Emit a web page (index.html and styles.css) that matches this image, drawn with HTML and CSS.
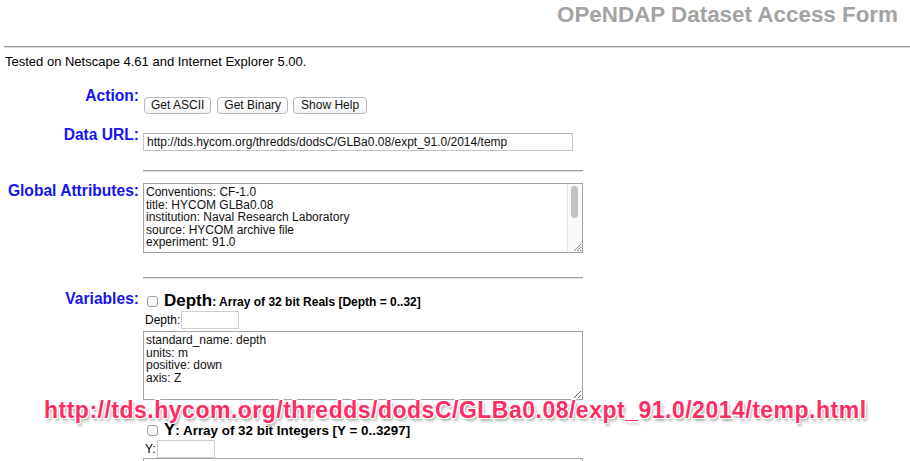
FILE: index.html
```html
<!DOCTYPE html>
<html lang="en">
<head>
<meta charset="utf-8">
<title>OPeNDAP Dataset Access Form</title>
<link rel="stylesheet" href="styles.css">
</head>
<body>
<h1 class="title">OPeNDAP Dataset Access Form</h1>
<div class="rule-full"></div>
<p class="note">Tested on Netscape 4.61 and Internet Explorer 5.00.</p>

<div class="form">
  <div class="row row-action">
    <div class="label">Action:</div>
    <div class="value actions">
      <button type="button">Get ASCII</button><button type="button">Get Binary</button><button type="button">Show Help</button>
    </div>
  </div>

  <div class="row row-url">
    <div class="label">Data URL:</div>
    <div class="value"><input class="url" type="text" value="http://tds.hycom.org/thredds/dodsC/GLBa0.08/expt_91.0/2014/temp"></div>
  </div>

  <div class="row row-rule1">
    <div></div>
    <div class="rule"></div>
  </div>

  <div class="row row-global">
    <div class="label">Global Attributes:</div>
    <div class="value">
      <div class="attr-wrap">
        <textarea class="box attrs" readonly>Conventions: CF-1.0
title: HYCOM GLBa0.08
institution: Naval Research Laboratory
source: HYCOM archive file
experiment: 91.0

history: archv2ncdf3z
field_type: instantaneous
cdm_data_type: GRID
featureType: GRID
location: Proto fmrc:GLBa0.08_expt_91.0</textarea>
        <div class="scrollbar" aria-hidden="true">
          <div class="thumb"></div>
          <svg class="grip" width="11" height="11" viewBox="0 0 11 11"><path d="M10 3 L3 10 M10 6 L6 10 M10 9 L9 10" stroke="#8a8a8a" stroke-width="1" fill="none"/></svg>
        </div>
      </div>
    </div>
  </div>

  <div class="row row-rule2">
    <div></div>
    <div class="rule"></div>
  </div>

  <div class="row row-vars">
    <div class="label">Variables:</div>
    <div class="value">
      <div class="var-head"><input type="checkbox" class="check"><span class="var-name">Depth</span><span class="var-desc">: Array of 32 bit Reals [Depth = 0..32]</span></div>
      <div class="var-dim"><span>Depth:</span><input class="dim" type="text"></div>
      <textarea class="box var-attrs" readonly>standard_name: depth
units: m
positive: down
axis: Z</textarea>

      <div class="var-head var-next"><input type="checkbox" class="check"><span class="var-name">Y</span><span class="var-desc">: Array of 32 bit Integers [Y = 0..3297]</span></div>
      <div class="var-dim"><span>Y:</span><input class="dim" type="text"></div>
      <textarea class="box var-attrs last" readonly>standard_name: projection_y_coordinate
units: 1
axis: Y</textarea>
    </div>
  </div>
</div>

<div class="overlay">http://tds.hycom.org/thredds/dodsC/GLBa0.08/expt_91.0/2014/temp.html</div>
</body>
</html>
```

FILE: styles.css
```css
* { box-sizing: border-box; }

html, body {
  margin: 0;
  padding: 0;
  background: #ffffff;
}

body {
  position: relative;
  width: 910px;
  height: 461px;
  overflow: hidden;
  padding-left: 4px;
  font-family: "Liberation Sans", Arial, Helvetica, sans-serif;
  color: #000;
}

.title {
  margin: 0;
  height: 46px;
  padding: 2px 12px 0 0;
  text-align: right;
  font-size: 22.4px;
  line-height: 26px;
  font-weight: bold;
  color: #a3a3a3;
}

.rule-full {
  height: 2px;
  border-top: 1px solid #9e9e9e;
  border-bottom: 1px solid #dddddd;
}

.note {
  margin: 6px 0 0 1px;
  font-size: 13px;
  line-height: 15px;
}

.row {
  display: grid;
  grid-template-columns: 135px 440px;
  column-gap: 4px;
  align-items: start;
}

.label {
  text-align: right;
  font-weight: bold;
  font-size: 15.6px;
  line-height: 18px;
  color: #1515ef;
}

.row-action { margin-top: 18px; }
.actions { padding-top: 10px; display: flex; }
.actions button {
  height: 17px;
  margin: 0 6px 0 0;
  padding: 0 6px;
  font-family: "Liberation Sans", Arial, sans-serif;
  font-size: 12px;
  line-height: 15px;
  color: #111;
  background: linear-gradient(#ffffff, #f4f4f4);
  border: 1px solid #b8b8b8;
  border-radius: 4px;
}
.actions button:first-child { margin-left: 1px; }
.actions button:nth-child(2) { margin-right: 5px; }
.actions button:last-child { padding: 0 7px; }

.row-url { margin-top: 12px; }
.url {
  display: block;
  margin-top: 7px;
  width: 430px;
  height: 18px;
  padding: 0 3px;
  font-family: "Liberation Sans", Arial, sans-serif;
  font-size: 12px;
  color: #111;
  border: 1px solid #c4c4c4;
  border-top-color: #b0b0b0;
  background: #fff;
}

.rule {
  height: 2px;
  border-top: 1px solid #9c9c9c;
  border-bottom: 1px solid #e2e2e2;
}
.row-rule1 { margin-top: 19px; }
.row-rule2 { margin-top: 24px; }

.row-global { margin-top: 10px; }

.box {
  display: block;
  width: 440px;
  margin: 0;
  padding: 2px 2px;
  font-family: "Liberation Sans", Arial, sans-serif;
  font-size: 12px;
  line-height: 12.6px;
  color: #111;
  border: 1px solid #a3a3a3;
  background: #fff;
  resize: both;
}

.attr-wrap {
  position: relative;
  width: 440px;
  margin-top: 1px;
}

.attrs {
  height: 70px;
  overflow: hidden;
  padding-right: 18px;
}

.scrollbar {
  position: absolute;
  top: 1px;
  right: 1px;
  bottom: 1px;
  width: 15px;
  background: #fafafa;
  border-left: 1px solid #e6e6e6;
}
.thumb {
  position: absolute;
  top: 2px;
  left: 3px;
  width: 7px;
  height: 32px;
  border-radius: 4px;
  background: #c2c2c2;
}
.grip {
  position: absolute;
  right: 0;
  bottom: 0;
}

.row-rule2 + .row-vars { margin-top: 11px; }

.var-head {
  height: 21px;
  line-height: 21px;
  white-space: nowrap;
}
.check {
  -webkit-appearance: none;
  appearance: none;
  display: inline-block;
  width: 11px;
  height: 11px;
  margin: 0 6px 0 4px;
  vertical-align: -1px;
  border: 1px solid #9d9d9d;
  border-radius: 3px;
  background: linear-gradient(#ffffff, #f3f3f3);
}
.var-name {
  font-weight: bold;
  font-size: 17px;
}
.var-desc {
  font-weight: bold;
  font-size: 12px;
}
.var-next .var-desc {
  font-size: 13.4px;
}

.var-dim {
  display: flex;
  align-items: center;
  height: 18px;
  font-size: 12px;
  margin-left: 2px;
}
.dim {
  width: 58px;
  height: 18px;
  margin-left: 1px;
  padding: 0 2px;
  border: 1px solid #cfcfcf;
  background: #fff;
}

.var-attrs {
  margin-top: 2px;
  height: 69px;
  overflow: hidden;
}
.var-attrs.last { margin-top: 0; }

.var-next { margin-top: 19px; }

.overlay {
  position: absolute;
  left: 44px;
  top: 396px;
  font-size: 23px;
  line-height: 28px;
  letter-spacing: 0.5px;
  font-weight: bold;
  color: #fd2d63;
  white-space: nowrap;
  text-shadow:
    1px 0 0 #fff, -1px 0 0 #fff, 0 1px 0 #fff, 0 -1px 0 #fff,
    1px 1px 0 #fff, -1px -1px 0 #fff, 1px -1px 0 #fff, -1px 1px 0 #fff,
    2px 3px 3px rgba(0, 0, 0, 0.35);
}
```
